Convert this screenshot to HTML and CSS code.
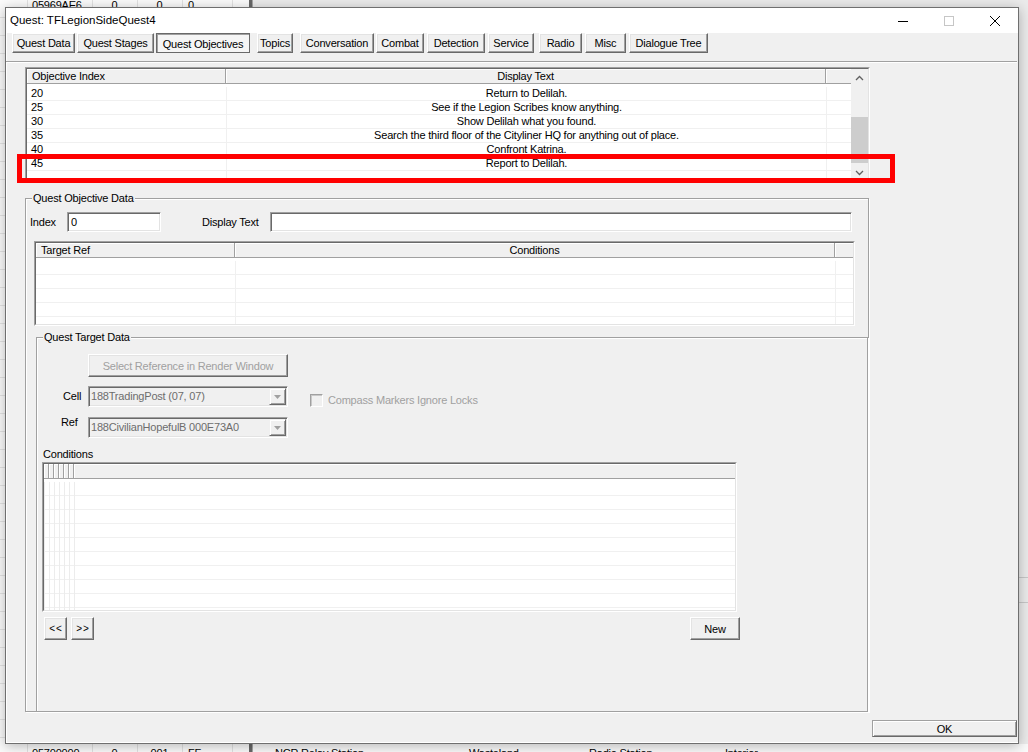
FILE: index.html
```html
<!DOCTYPE html>
<html lang="en">
<head>
    <meta charset="UTF-8">
    <title>Quest: TFLegionSideQuest4</title>
    <link rel="stylesheet" href="styles.css">
</head>
<body>

<div class="desktop">
    <!-- editor window behind the dialog -->
    <div class="app">
        <div class="app-list">
            <div class="app-row top">
                <span class="c-id">05969AE6</span><span class="c-num">0</span><span class="c-num">0</span><span class="c-flag">0</span>
            </div>
            <div class="app-row bottom">
                <span class="c-id">05700000</span><span class="c-num">0</span><span class="c-num">001</span><span class="c-flag">FF</span>
            </div>
        </div>
        <div class="app-split"></div>
        <div class="app-side">
            <div class="side-lines"></div>
            <div class="app-row bottom side-row">
                <span class="s1">NCR Relay Station</span><span class="s2">Wasteland</span><span class="s3">Radio Station</span><span class="s4">Interior</span>
            </div>
        </div>
    </div>

    <!-- Quest dialog -->
    <div class="window">
        <div class="titlebar">
            <span class="title">Quest: TFLegionSideQuest4</span>
            <div class="caption-btns">
                <span class="cap-btn"><svg width="10" height="10" viewBox="0 0 10 10"><path d="M0 5.5h10" stroke="#000" stroke-width="1"/></svg></span>
                <span class="cap-btn"><svg width="10" height="10" viewBox="0 0 10 10"><rect x="0.5" y="0.5" width="9" height="9" fill="none" stroke="#c6c6c6"/></svg></span>
                <span class="cap-btn"><svg width="10" height="10" viewBox="0 0 10 10"><path d="M0 0L10 10M10 0L0 10" stroke="#000" stroke-width="1"/></svg></span>
            </div>
        </div>

        <div class="client">
            <div class="tabs">
                <button class="tab">Quest Data</button>
                <button class="tab">Quest Stages</button>
                <button class="tab active">Quest Objectives</button>
                <button class="tab">Topics</button>
                <button class="tab">Conversation</button>
                <button class="tab">Combat</button>
                <button class="tab">Detection</button>
                <button class="tab">Service</button>
                <button class="tab">Radio</button>
                <button class="tab">Misc</button>
                <button class="tab">Dialogue Tree</button>
            </div>
            <div class="tab-rule"></div>

            <div class="page">
                <!-- objective list -->
                <div class="objectives">
                    <div class="listview lv-objectives">
                        <div class="lv-frame">
                            <div class="lv-main">
                                <div class="lv-head">
                                    <div class="lv-hcell">Objective Index</div>
                                    <div class="lv-hcell center">Display Text</div>
                                    <div class="lv-hcell"></div>
                                </div>
                                <div class="lv-body">
                                    <div class="lv-row"><div>20</div><div class="center">Return to Delilah.</div><div></div></div>
                                    <div class="lv-row"><div>25</div><div class="center">See if the Legion Scribes know anything.</div><div></div></div>
                                    <div class="lv-row"><div>30</div><div class="center">Show Delilah what you found.</div><div></div></div>
                                    <div class="lv-row"><div>35</div><div class="center">Search the third floor of the Cityliner HQ for anything out of place.</div><div></div></div>
                                    <div class="lv-row"><div>40</div><div class="center">Confront Katrina.</div><div></div></div>
                                    <div class="lv-row"><div>45</div><div class="center">Report to Delilah.</div><div></div></div>
                                    <div class="lv-row"><div></div><div></div><div></div></div>
                                </div>
                            </div>
                            <div class="vscroll">
                                <div class="sb-btn"><svg width="9" height="6" viewBox="0 0 9 6"><path d="M1 5L4.5 1.5L8 5" fill="none" stroke="#606060" stroke-width="1.3"/></svg></div>
                                <div class="sb-track"><div class="sb-thumb"></div></div>
                                <div class="sb-btn"><svg width="9" height="6" viewBox="0 0 9 6"><path d="M1 1L4.5 4.5L8 1" fill="none" stroke="#606060" stroke-width="1.3"/></svg></div>
                            </div>
                        </div>
                    </div>
                    <div class="highlight"></div>
                </div>

                <!-- Quest Objective Data -->
                <div class="group group-objective">
                    <span class="legend">Quest Objective Data</span>

                    <div class="field-row">
                        <span class="field-label">Index</span>
                        <input class="edit edit-index" type="text" value="0">
                        <span class="field-label wide">Display Text</span>
                        <input class="edit edit-text" type="text" value="">
                    </div>

                    <div class="listview lv-targets">
                        <div class="lv-frame">
                            <div class="lv-main">
                                <div class="lv-head">
                                    <div class="lv-hcell">Target Ref</div>
                                    <div class="lv-hcell center">Conditions</div>
                                    <div class="lv-hcell"></div>
                                </div>
                                <div class="lv-body">
                                    <div class="lv-row"><div></div><div></div><div></div></div>
                                    <div class="lv-row"><div></div><div></div><div></div></div>
                                    <div class="lv-row"><div></div><div></div><div></div></div>
                                    <div class="lv-row"><div></div><div></div><div></div></div>
                                    <div class="lv-row"><div></div><div></div><div></div></div>
                                </div>
                            </div>
                        </div>
                    </div>

                    <!-- Quest Target Data -->
                    <div class="group group-target">
                        <span class="legend">Quest Target Data</span>

                        <button class="btn btn-select" disabled>Select Reference in Render Window</button>

                        <div class="combo-row">
                            <span class="combo-label cell">Cell</span>
                            <div class="combo">
                                <span class="combo-text">188TradingPost (07, 07)</span>
                                <span class="drop"><svg width="7" height="4" viewBox="0 0 7 4"><path d="M0 0h7L3.5 4z" fill="#a0a0a0"/></svg></span>
                            </div>
                            <label class="check-wrap">
                                <span class="checkbox"></span>
                                <span class="check-label">Compass Markers Ignore Locks</span>
                            </label>
                        </div>

                        <div class="combo-row ref-row">
                            <span class="combo-label ref">Ref</span>
                            <div class="combo">
                                <span class="combo-text">188CivilianHopefulB 000E73A0</span>
                                <span class="drop"><svg width="7" height="4" viewBox="0 0 7 4"><path d="M0 0h7L3.5 4z" fill="#a0a0a0"/></svg></span>
                            </div>
                        </div>

                        <div class="cond-label">Conditions</div>
                        <div class="listview lv-conds">
                            <div class="lv-frame">
                                <div class="lv-main">
                                    <div class="lv-head cond-head">
                                        <div class="lv-hcell"></div>
                                        <div class="lv-hcell"></div>
                                        <div class="lv-hcell"></div>
                                        <div class="lv-hcell"></div>
                                        <div class="lv-hcell"></div>
                                        <div class="lv-hcell"></div>
                                        <div class="lv-hcell"></div>
                                    </div>
                                    <div class="cond-body"></div>
                                </div>
                            </div>
                        </div>

                        <div class="nav-row">
                            <button class="btn btn-nav">&lt;&lt;</button>
                            <button class="btn btn-nav">&gt;&gt;</button>
                            <button class="btn btn-new">New</button>
                        </div>
                    </div>
                </div>
            </div>

            <div class="footer">
                <button class="btn btn-ok">OK</button>
            </div>
        </div>
    </div>
</div>

</body>
</html>
```

FILE: styles.css
```css
* {
    margin: 0;
    padding: 0;
    box-sizing: border-box;
}

body {
    width: 1028px;
    height: 752px;
    overflow: hidden;
    font-family: "Liberation Sans", Arial, sans-serif;
    font-size: 11px;
    letter-spacing: -0.2px;
    color: #000;
    background: #f0f0f0;
}

.desktop {
    position: relative;
    width: 1028px;
    height: 752px;
    overflow: hidden;
}

/* Background editor */
.app {
    display: flex;
    height: 752px;
}

.app-list {
    width: 249px;
    display: flex;
    flex-direction: column;
    justify-content: space-between;
    background:
        linear-gradient(to right, transparent 27px, #e2e2e2 27px 28px, transparent 28px 92px, #e2e2e2 92px 93px,
            transparent 93px 137px, #e2e2e2 137px 138px, transparent 138px 182px, #e2e2e2 182px 183px,
            transparent 183px 232px, #e2e2e2 232px 233px, transparent 233px),
        repeating-linear-gradient(to bottom, #fbfbfb 0 17px, #e4e4e4 17px 18px);
}

.app-row {
    display: flex;
    height: 18px;
    line-height: 18px;
    white-space: nowrap;
}

.app-row.top {
    margin-top: -4px;
}

.app-row.bottom {
    margin-bottom: -10px;
}

.c-id {
    width: 92px;
    padding-left: 32px;
}

.c-num {
    width: 45px;
    text-align: center;
}

.c-flag {
    padding-left: 6px;
}

.app-split {
    width: 4px;
    background: #686868;
    border-right: 1px solid #a8a8a8;
}

.app-side {
    flex: 1;
    display: flex;
    flex-direction: column;
    background: #ebebeb;
}

.side-lines {
    flex: 1;
    margin-top: 480px;
    background:
        linear-gradient(to bottom, transparent 97px, #c8c8c8 97px 98px, transparent 98px 122px, #c8c8c8 122px 123px, transparent 123px);
}

.side-row {
    background: #fafafa;
}

.side-row span {
    display: block;
}

.s1 { width: 200px; padding-left: 22px; }
.s2 { width: 120px; padding-left: 16px; }
.s3 { width: 140px; padding-left: 16px; }
.s4 { padding-left: 12px; }

/* Dialog window */
.window {
    position: absolute;
    left: 5px;
    top: 7px;
    width: 1014px;
    height: 737px;
    border: 1px solid #6f6f6f;
    background: #f0f0f0;
    box-shadow: 0 2px 12px rgba(0, 0, 0, 0.28);
    display: flex;
    flex-direction: column;
}

.titlebar {
    height: 25px;
    background: #fff;
    display: flex;
    align-items: center;
}

.title {
    flex: 1;
    padding: 0 0 2px 4px;
    font-size: 11.5px;
    letter-spacing: 0;
}

.caption-btns {
    display: flex;
    align-self: stretch;
}

.cap-btn {
    width: 46px;
    display: flex;
    align-items: center;
    justify-content: center;
}

.client {
    flex: 1;
    background: #f0f0f0;
    box-shadow: inset 1px 0 #fff, inset 0 -1px #fff;
}

/* Buttons */
button {
    font: inherit;
    letter-spacing: inherit;
    color: #000;
}

.btn,
.tab {
    background: #f0f0f0;
    border: 1px solid;
    border-color: #fff #696969 #696969 #fff;
    box-shadow: inset -1px -1px #a0a0a0, inset 1px 1px #e3e3e3;
}

/* Tab buttons */
.tabs {
    display: flex;
    padding-left: 6px;
}

.tab {
    height: 20px;
    white-space: nowrap;
}

.tab.active {
    background: #f5f5f5;
    border-color: #696969;
    box-shadow: inset 1px 1px #a0a0a0;
    padding-top: 1px;
}

.tab:nth-child(1) { width: 63px; }
.tab:nth-child(2) { width: 77px; margin-left: 2px; }
.tab:nth-child(3) { width: 94px; margin-left: 2px; }
.tab:nth-child(4) { width: 36px; margin-left: 7px; }
.tab:nth-child(5) { width: 74px; margin-left: 7px; }
.tab:nth-child(6) { width: 48px; margin-left: 2px; }
.tab:nth-child(7) { width: 58px; margin-left: 3px; }
.tab:nth-child(8) { width: 46px; margin-left: 3px; }
.tab:nth-child(9) { width: 43px; margin-left: 5px; }
.tab:nth-child(10) { width: 41px; margin-left: 3px; }
.tab:nth-child(11) { width: 79px; margin-left: 3px; }

.tab-rule {
    margin: 8px 1px 0 0;
    height: 2px;
    border-top: 1px solid #a0a0a0;
    border-bottom: 1px solid #fff;
}

.page {
    margin-top: 4px;
    padding-left: 19px;
}

/* List views */
.listview {
    display: flex;
    background: #fff;
    border: 1px solid;
    border-color: #a0a0a0 #fff #fff #a0a0a0;
}

.lv-frame {
    flex: 1;
    display: flex;
    min-width: 0;
    overflow: hidden;
    border: 1px solid;
    border-color: #696969 #e3e3e3 #e3e3e3 #696969;
}

.lv-main {
    flex: 1;
    min-width: 0;
    overflow: hidden;
}

.lv-head {
    display: grid;
    grid-template-columns: 199px 600px 1fr;
    height: 15px;
    background: #f0f0f0;
    border-bottom: 1px solid #a0a0a0;
}

.lv-hcell {
    border-right: 1px solid #a0a0a0;
    box-shadow: inset 1px 1px #fff;
    padding: 1px 0 0 5px;
    line-height: 13px;
    white-space: nowrap;
    overflow: hidden;
}

.lv-hcell:last-child {
    border-right: 0;
}

.lv-body {
    padding-top: 3px;
}

.lv-row {
    display: grid;
    grid-template-columns: 200px 600px 1fr;
    height: 14px;
    line-height: 13px;
    border-bottom: 1px solid #f0f0f0;
}

.lv-row > div {
    border-right: 1px solid #f0f0f0;
    padding-left: 4px;
    white-space: nowrap;
    overflow: hidden;
}

.lv-row > div:last-child {
    border-right: 0;
}

.lv-hcell.center,
.lv-row > .center {
    padding-left: 0;
    text-align: center;
}

.objectives {
    position: relative;
    width: 845px;
}

.lv-objectives {
    height: 116px;
}

.highlight {
    position: absolute;
    left: -8px;
    top: 87px;
    width: 878px;
    height: 29px;
    border: 5px solid #ff0000;
}

/* Scrollbar */
.vscroll {
    width: 17px;
    display: flex;
    flex-direction: column;
    background: #f0f0f0;
}

.sb-btn {
    height: 17px;
    display: flex;
    align-items: center;
    justify-content: center;
}

.sb-track {
    flex: 1;
    padding-top: 31px;
}

.sb-thumb {
    height: 46px;
    background: #cdcdcd;
}

/* Group boxes */
.group {
    position: relative;
    border: 1px solid #a0a0a0;
    box-shadow: inset 1px 1px #fff, 1px 1px #fff;
}

.legend {
    position: absolute;
    top: -7px;
    left: 6px;
    padding: 0 1px;
    line-height: 13px;
    background: #f0f0f0;
    white-space: nowrap;
}

.group-objective {
    margin-top: 15px;
    width: 844px;
    height: 514px;
    padding-top: 13px;
}

.field-row {
    display: flex;
    align-items: center;
    height: 20px;
    margin-left: 4px;
}

.field-label {
    width: 37px;
    white-space: nowrap;
}

.field-label.wide {
    width: 68px;
    margin-left: 41px;
}

.edit {
    height: 20px;
    background: #fff;
    border: 1px solid;
    border-color: #a0a0a0 #fff #fff #a0a0a0;
    box-shadow: inset 1px 1px #696969, inset -1px -1px #e3e3e3;
    font: inherit;
    letter-spacing: inherit;
    color: #000;
    padding: 0 0 0 3px;
    outline: none;
}

.edit-index {
    width: 94px;
}

.edit-text {
    width: 582px;
}

.lv-targets {
    margin: 9px 0 0 8px;
    width: 821px;
    height: 85px;
}

.group-target {
    margin: 11px 0 0 10px;
    width: 832px;
    height: 375px;
    padding-top: 16px;
}

.btn-select {
    display: block;
    margin-left: 51px;
    width: 200px;
    height: 23px;
    color: #a0a0a0;
}

.combo-row {
    display: flex;
    height: 21px;
    margin-top: 9px;
}

.ref-row {
    margin-top: 10px;
}

.combo-label {
    width: 51px;
    line-height: 13px;
    align-self: center;
}

.combo-label.cell {
    padding-left: 26px;
}

.combo-label.ref {
    padding-left: 24px;
    align-self: flex-start;
    margin-top: -1px;
}

.combo {
    width: 200px;
    display: flex;
    padding: 1px;
    background: #f0f0f0;
    border: 1px solid;
    border-color: #a0a0a0 #fff #fff #a0a0a0;
    box-shadow: inset 1px 1px #696969, inset -1px -1px #e3e3e3;
}

.combo-text {
    flex: 1;
    padding-left: 1px;
    line-height: 17px;
    color: #6d6d6d;
    white-space: nowrap;
    overflow: hidden;
}

.drop {
    width: 17px;
    display: flex;
    align-items: center;
    justify-content: center;
    border: 1px solid;
    border-color: #f0f0f0 #696969 #696969 #f0f0f0;
    box-shadow: inset 1px 1px #fff, inset -1px -1px #a0a0a0;
}

.check-wrap {
    display: flex;
    align-items: center;
    align-self: flex-start;
    margin: 8px 0 0 22px;
    color: #a0a0a0;
    line-height: 13px;
}

.checkbox {
    width: 13px;
    height: 13px;
    background: #f0f0f0;
    border: 1px solid;
    border-color: #a0a0a0 #fff #fff #a0a0a0;
    box-shadow: inset 1px 1px #c8c8c8;
}

.check-label {
    margin-left: 5px;
    white-space: nowrap;
}

.cond-label {
    margin: 10px 0 0 6px;
    line-height: 13px;
}

.lv-conds {
    margin: 1px 0 0 5px;
    width: 695px;
    height: 150px;
}

.cond-head {
    grid-template-columns: repeat(6, 5px) 1fr;
}

.cond-head .lv-hcell {
    padding: 0;
}

.cond-body {
    height: 100%;
    margin-top: 3px;
    background-image:
        repeating-linear-gradient(to right, #ececec 0 1px, transparent 1px 5px),
        repeating-linear-gradient(to bottom, transparent 0 13px, #f0f0f0 13px 14px);
    background-size: 31px 100%, 100% 100%;
    background-repeat: no-repeat;
}

.nav-row {
    display: flex;
    margin: 5px 0 0 7px;
}

.btn-nav {
    width: 23px;
    height: 23px;
    margin-right: 4px;
    font-size: 10px;
    letter-spacing: 1px;
    padding-left: 1px;
}

.btn-new {
    width: 50px;
    height: 23px;
    margin-left: 592px;
}

/* OK */
.footer {
    display: flex;
    justify-content: flex-end;
    margin: 8px 1px 0 0;
}

.btn-ok {
    width: 145px;
    height: 17px;
    border-color: #a0a0a0 #696969 #696969 #a0a0a0;
    box-shadow: inset 1px 1px #fff, inset -1px -1px #a0a0a0;
}
```
